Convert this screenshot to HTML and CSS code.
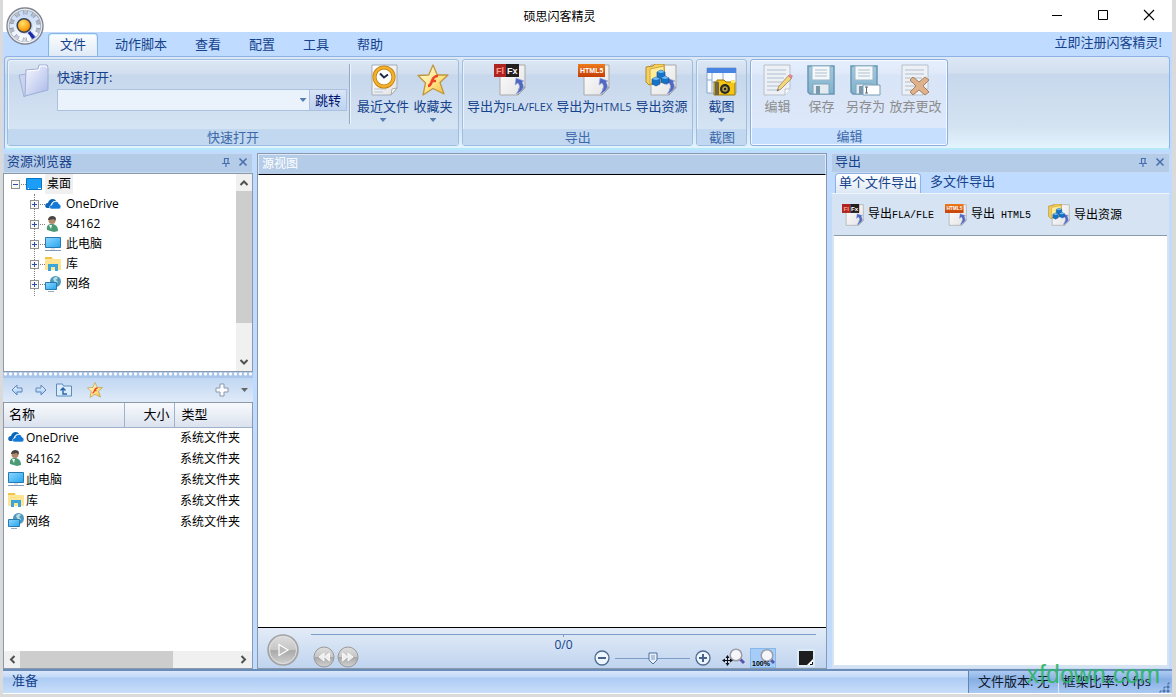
FILE: index.html
```html
<!DOCTYPE html>
<html lang="zh-CN">
<head>
<meta charset="utf-8">
<meta name="viewport" content="width=device-width, initial-scale=1">
<title>硕思闪客精灵</title>
<link rel="stylesheet" href="styles.css">
</head>
<body>
<svg class="sprite" aria-hidden="true">
  <defs>
    <linearGradient id="g-silver" x1="0" y1="0" x2="0" y2="1"><stop offset="0" stop-color="#c3c8d1"/><stop offset=".5" stop-color="#a4acba"/><stop offset="1" stop-color="#dde1e8"/></linearGradient>
    <linearGradient id="g-gear" x1="0" y1="0" x2="0" y2="1"><stop offset="0" stop-color="#c6daf6"/><stop offset="1" stop-color="#fafcff"/></linearGradient>
    <linearGradient id="g-folder" x1="0" y1="0" x2="1" y2="1"><stop offset="0" stop-color="#f8f9ff"/><stop offset="1" stop-color="#a9b8e8"/></linearGradient>
    <radialGradient id="g-orange" cx=".4" cy=".35" r=".7"><stop offset="0" stop-color="#ffe36a"/><stop offset=".6" stop-color="#ffab1c"/><stop offset="1" stop-color="#e98500"/></radialGradient>
    <linearGradient id="g-star" x1="0" y1="0" x2="1" y2="1"><stop offset="0" stop-color="#fffde6"/><stop offset=".55" stop-color="#ffe58a"/><stop offset="1" stop-color="#f2b52e"/></linearGradient>
    <linearGradient id="g-page" x1="0" y1="0" x2="1" y2="1"><stop offset="0" stop-color="#ffffff"/><stop offset="1" stop-color="#e2e2e2"/></linearGradient>
    <linearGradient id="g-html" x1="0" y1="0" x2="0" y2="1"><stop offset="0" stop-color="#ee7b1c"/><stop offset="1" stop-color="#c33d05"/></linearGradient>
    <linearGradient id="g-screen" x1="0" y1="0" x2="1" y2="1"><stop offset="0" stop-color="#8fd8ff"/><stop offset="1" stop-color="#25a5ee"/></linearGradient>
    <linearGradient id="g-knob" x1="0" y1="0" x2="0" y2="1"><stop offset="0" stop-color="#dedede"/><stop offset=".5" stop-color="#c6c6c6"/><stop offset=".52" stop-color="#a9a9a9"/><stop offset="1" stop-color="#d2d2d2"/></linearGradient>
    <linearGradient id="g-arrow" x1="0" y1="0" x2="0" y2="1"><stop offset="0" stop-color="#ffffff"/><stop offset="1" stop-color="#8fbdf0"/></linearGradient>
    <linearGradient id="g-disk" x1="0" y1="0" x2="0" y2="1"><stop offset="0" stop-color="#a3c9de"/><stop offset="1" stop-color="#7fb2cd"/></linearGradient>
  </defs>
  <symbol id="i-orb" viewBox="0 0 38 38">
    <circle cx="19" cy="19" r="18" fill="url(#g-silver)" stroke="#7d8592" stroke-width="1.400"/>
    <circle cx="19" cy="19" r="16.800" fill="none" stroke="#fff" stroke-opacity=".8"/>
    <circle cx="19" cy="19" r="13" fill="none" stroke="#8391a8" stroke-width="5.500" stroke-dasharray="5 3.168" stroke-dashoffset="2.500"/>
    <circle cx="19" cy="19" r="13" fill="none" stroke="url(#g-gear)" stroke-width="5" stroke-dasharray="4 4.168" stroke-dashoffset="2"/>
    <circle cx="19" cy="19" r="11.500" fill="url(#g-gear)"/>
    <circle cx="19" cy="19" r="8" fill="#d3dae6"/>
    <path d="M23 25l5 6" stroke="#1b2aa5" stroke-width="3.400"/><path d="M25.500 25l4 5" stroke="#8ea2e8"/>
    <circle cx="18" cy="18.500" r="6.800" fill="url(#g-orange)" stroke="#3d4257" stroke-width="1.600"/>
  </symbol>
  <symbol id="i-folder" viewBox="0 0 32 34">
    <path d="M1 11l8-1 2 19-5 4z" fill="#c9d3f0" stroke="#a3b1d8"/>
    <path d="M8 6l12-1 1-4h8l1 3v22L7 32z" fill="url(#g-folder)" stroke="#9eacd6"/>
    <path d="M9 7l12-1 1-4h6l1 2" fill="none" stroke="#fff"/>
  </symbol>
  <symbol id="i-clock" viewBox="0 0 32 32">
    <path d="M5 1h25v23l-6 7H5z" fill="url(#g-page)" stroke="#a3aebd"/><path d="M24 31l1-6 5-1z" fill="#fff" stroke="#aaa"/>
    <path d="M7 25h12M7 28h9" stroke="#b7c4d6"/>
    <circle cx="17" cy="13" r="9.500" fill="#fdfdfd" stroke="#b97e0c" stroke-width="4"/><circle cx="17" cy="13" r="9.500" fill="none" stroke="#f7ae2a" stroke-width="2.500"/>
    <path d="M13 9.500l4 4 4-3" fill="none" stroke="#222c48" stroke-width="2"/>
  </symbol>
  <symbol id="i-star" viewBox="0 0 32 32">
    <path d="M16 1l4.300 10H31l-8 7.500L27 30l-11-5.500L6 31l2.500-12L1 11.500l10.700-.5z" fill="url(#g-star)" stroke="#bf9640" stroke-width="1.300" stroke-linejoin="round"/>
    <path d="M21 12c-4 0-5 2-6 5s-2 5-4 5M14 17h5" fill="none" stroke="#ee4326" stroke-width="2.600"/>
  </symbol>
  <symbol id="i-pagearrow" viewBox="0 0 32 32">
    <path d="M6 1h25v23l-7 7H6z" fill="url(#g-page)" stroke="#a9a9a9"/><path d="M24 31l1-7 6-1z" fill="#fff" stroke="#999"/>
    <path d="M22 30c7-3 9-7 6-12l2-1-8-3-1 7 3-2c3 4 1 7-2 11z" fill="#5068c0" stroke="#99abe4" stroke-width=".6"/>
  </symbol>
  <symbol id="i-res" viewBox="0 0 32 32">
    <use href="#i-pagearrow"/><path d="M1 3l7-1 2-2h9l1 17-16 4-3-3z" fill="#f3d160" stroke="#b88a20"/><path d="M5 5l14-3v16L5 20z" fill="#ffec98" stroke="#d1a63c"/>
    <g fill="#1673c8" stroke="#0a4a96" stroke-width=".6"><path d="M12 8l4-2 4 2v5l-4 2-4-2z"/><path d="M7 15l4-2 4 2v5l-4 2-4-2z"/><path d="M16 14l4-2 4 2v4l-4 2-4-2z"/></g><path d="M12 8l4 1 4-1-4-2zM7 15l4 1 4-1-4-2zM16 14l4 1 4-1-4-2z" fill="#6fbcf5"/>
  </symbol>
  <symbol id="i-shot" viewBox="0 0 32 32">
    <path d="M2 4h29v25H2z" fill="#f8fbff" stroke="#8aa4c8"/><path d="M2 4h29v5H2z" fill="#4a84e2"/><path d="M7 9v19M2 16h5M18 9v8M7 18h11" stroke="#8dabd3"/>
    <path d="M9 18h3v-2h7l2 2h9v13H9z" fill="#f2c611" stroke="#95740a"/><path d="M10 18h4v13h-4z" fill="#6e6550"/><path d="M26 16h4v3h-4z" fill="#ffe95c"/>
    <circle cx="20" cy="25" r="5" fill="#292929"/><circle cx="20" cy="25" r="2.800" fill="#b5a248"/><circle cx="20" cy="25" r="1.200" fill="#222"/>
  </symbol>
  <symbol id="i-page" viewBox="0 0 32 32">
    <path d="M3 1h26v24l-5 6H3z" fill="#edf1f6" stroke="#b6c0cd"/><path d="M24 31v-6h5" fill="#fff" stroke="#b6c0cd"/>
    <path d="M6 6h19M6 10h19M6 14h17M6 18h15M6 22h14M6 26h12" stroke="#c5cedb" stroke-width="1.500"/>
  </symbol>
  <symbol id="i-edit" viewBox="0 0 32 32">
    <use href="#i-page"/><path d="M16 27l2-5 10-11 3 3-11 11z" fill="#f4d878" stroke="#a9967a"/><path d="M27 12l2-2 3 2-2 3z" fill="#d9868e"/><path d="M16 27l2-1-1-1z" fill="#555"/>
  </symbol>
  <symbol id="i-save" viewBox="0 0 32 32">
    <path d="M3 2h26v28H5l-2-2z" fill="url(#g-disk)" stroke="#6a96b1" stroke-width="1.500"/><path d="M7 2h18v14H7z" fill="#f4f8fb" stroke="#9bb8ca"/><path d="M10 6h12M10 9h12M10 12h12" stroke="#aebecb"/>
    <path d="M8 20h16v10H8z" fill="#e3ebf1" stroke="#7fa4bb"/><path d="M11 22h4v8h-4z" fill="#7998aa"/>
  </symbol>
  <symbol id="i-saveas" viewBox="0 0 32 32"><use href="#i-save" x="-1"/><path d="M14 21h17v10H14z" fill="#fff" stroke="#799bb5"/><path d="M16 23h3M16 29h3M17.500 23v6" stroke="#567"/></symbol>
  <symbol id="i-discard" viewBox="0 0 32 32"><use href="#i-page"/><path d="M14 13l6 5 6-5 4 3-6 6 6 6-4 3-6-5-6 5-3-3 6-6-6-6z" fill="#dfb28e" stroke="#a9805f"/></symbol>
  <symbol id="i-desktop" viewBox="0 0 16 16"><path d="M.5 2.500h15v11H.5z" fill="#1b9df8" stroke="#0876c8"/><path d="M2 12.500h1M12 12.500h3" stroke="#fff"/></symbol>
  <symbol id="i-cloud" viewBox="0 0 16 16"><path d="M2 12C-1 11 0 7 3 7c1-5 7-5 8-2-4 0-6 3-5 7z" fill="#0a64b8"/><path d="M6 13c-2-1-2-4 1-4 0-4 6-5 7-1 3 1 2 5 0 5z" fill="#1478d6" stroke="#fff" stroke-width=".6"/></symbol>
  <symbol id="i-user" viewBox="0 0 16 16"><path d="M2 14c-1-5 2-6 5-6s6 2 6 7l-4 1z" fill="#4a9a76"/><path d="M4 9l2 4 1-4z" fill="#f5fbf8"/><circle cx="7" cy="4.500" r="3.500" fill="#b18a6c"/><path d="M3 4c0-5 8-5 8-1l-1 2-1-2-5 1z" fill="#4a4542"/></symbol>
  <symbol id="i-pc" viewBox="0 0 16 16"><path d="M.5 1.500h15v10H.5z" fill="url(#g-screen)" stroke="#287bb0"/><path d="M6 12h4v2H6z" fill="#dde6ef"/><path d="M0 14.500h16" stroke="#7f9bb8"/></symbol>
  <symbol id="i-lib" viewBox="0 0 16 16"><path d="M0 1h7l1 2h8v11H0z" fill="#ffe493"/><path d="M0 1h7v2H0z" fill="#f0c34a"/><path d="M3 15V8h10v7h-3v-4H6v4z" fill="#39a5d8"/></symbol>
  <symbol id="i-net" viewBox="0 0 16 16"><circle cx="10.500" cy="5.500" r="5.500" fill="#4f98bd"/><path d="M8 3c2-3 4-2 5-1l-2 2 2 2-2 3z" fill="#b2dbe2"/><path d="M.5 6.500h11v7H.5z" fill="url(#g-screen)" stroke="#287bb0"/><path d="M3 15.500h6" stroke="#9ab"/></symbol>
  <symbol id="i-pin" viewBox="0 0 10 10"><path d="M3 1.500h5M3.500 1v5M7 1v5M1 6.500h8M5 7v3" fill="none" stroke="#4a6fae" stroke-width="1.200"/></symbol>
  <symbol id="i-x" viewBox="0 0 10 10"><path d="M1.500 1.500l7 7M8.500 1.500l-7 7" stroke="#4a6fae" stroke-width="1.600"/></symbol>
  <symbol id="i-back" viewBox="0 0 12 12"><path d="M1 6l5-5v3h5v4H6v3z" fill="url(#g-arrow)" stroke="#5c87bd" stroke-linejoin="round"/></symbol>
  <symbol id="i-up" viewBox="0 0 16 14"><path d="M.5 13V1h6l1 2h8v10z" fill="#dcecfc" stroke="#5d8cbc"/><path d="M11 11H7V5M4.500 7.500L7 5l2.500 2.500" fill="none" stroke="#2563ad" stroke-width="1.400"/></symbol>
  <symbol id="i-plus" viewBox="0 0 14 14"><path d="M5 1h4v4h4v4H9v4H5V9H1V5h4z" fill="#fafcff" stroke="#8b98aa"/></symbol>
  <symbol id="i-play" viewBox="0 0 32 32"><circle cx="16" cy="16" r="15" fill="url(#g-knob)" stroke="#a3a3a3" stroke-width="1.500"/><circle cx="16" cy="16" r="13.500" fill="none" stroke="#e0e0e0"/><path d="M12 10.500l9 5.500-9 5.500z" fill="#bbb" stroke="#fff" stroke-width="1.200"/></symbol>
  <symbol id="i-ff" viewBox="0 0 22 22"><circle cx="11" cy="11" r="10" fill="url(#g-knob)" stroke="#9a9a9a"/><path d="M5.500 7l5 4-5 4zM11 7l5 4-5 4z" fill="#eee" stroke="#fff" stroke-width=".8"/></symbol>
  <symbol id="i-zin" viewBox="0 0 16 16"><circle cx="8" cy="8" r="7" fill="#edf5fe" stroke="#4f6b91" stroke-width="1.300"/><path d="M4 8h8M8 4v8" stroke="#46618b" stroke-width="2"/></symbol>
  <symbol id="i-zout" viewBox="0 0 16 16"><circle cx="8" cy="8" r="7" fill="#edf5fe" stroke="#4f6b91" stroke-width="1.300"/><path d="M4 8h8" stroke="#46618b" stroke-width="2"/></symbol>
  <symbol id="i-fit" viewBox="0 0 24 20"><path d="M18 11l4 4" stroke="#5758ad" stroke-width="3"/><circle cx="14" cy="7" r="5.800" fill="#f6f6fa" stroke="#9b9da9" stroke-width="1.500"/><path d="M1 12.500h9M5.500 8v9" stroke="#111"/><path d="M0 12.500l3-2v4zM11 12.500l-3-2v4zM5.500 7l-2 3h4zM5.500 18l-2-3h4z" fill="#111"/></symbol>
  <symbol id="i-bg" viewBox="0 0 20 20"><path d="M1 1h18v18H1z" fill="#dceaf6"/><path d="M3 3h14v14H3z" fill="#1d1d1d"/><path d="M17 11l-6 6h6z" fill="#fff"/><path d="M16.500 14v2.500H14" fill="none" stroke="#111"/></symbol>
  <symbol id="i-min" viewBox="0 0 12 12"><path d="M1 6.500h10" stroke="#000"/></symbol>
  <symbol id="i-max" viewBox="0 0 12 12"><path d="M1.500 1.500h9v9h-9z" fill="none" stroke="#000"/></symbol>
  <symbol id="i-close" viewBox="0 0 12 12"><path d="M1 1l10 10M11 1L1 11" stroke="#000" stroke-width="1.100"/></symbol>
  <symbol id="i-chev" viewBox="0 0 10 10"><path d="M1.500 7L5 3.500 8.500 7" fill="none" stroke="#505050" stroke-width="2"/></symbol>
</svg>

<div class="window">
  <header class="titlebar">
    <button class="orb" aria-label="应用程序菜单"><svg><use href="#i-orb"/></svg></button>
    <h1 class="title">硕思闪客精灵</h1>
    <button class="winbtn" aria-label="最小化"><svg><use href="#i-min"/></svg></button>
    <button class="winbtn" aria-label="最大化"><svg><use href="#i-max"/></svg></button>
    <button class="winbtn" aria-label="关闭"><svg><use href="#i-close"/></svg></button>
  </header>

  <nav class="menu">
    <button class="menu-tab active">文件</button>
    <button class="menu-tab">动作脚本</button>
    <button class="menu-tab">查看</button>
    <button class="menu-tab">配置</button>
    <button class="menu-tab">工具</button>
    <button class="menu-tab">帮助</button>
    <a class="register" href="#register">立即注册闪客精灵!</a>
  </nav>

  <section class="ribbon">
    <div class="group">
      <div class="group-body">
        <svg class="folder"><use href="#i-folder"/></svg>
        <form class="quick">
          <label for="quick-path">快速打开:</label>
          <div class="combo">
            <input id="quick-path" type="text">
            <button type="button" class="drop" aria-label="展开"><span class="caret"></span></button>
            <button type="button" class="go">跳转</button>
          </div>
        </form>
        <button class="big"><svg><use href="#i-clock"/></svg><span>最近文件</span><span class="caret"></span></button>
        <button class="big"><svg><use href="#i-star"/></svg><span>收藏夹</span><span class="caret"></span></button>
      </div>
      <h2 class="caption">快速打开</h2>
    </div>
    <div class="group">
      <div class="group-body">
        <button class="big"><svg class="lettered" viewBox="0 0 32 32"><use href="#i-pagearrow"/><path d="M0 0h12v13H0z" fill="#ae2422"/><path d="M12 0h13v13H12z" fill="#231f20"/><text x="2" y="10" font-size="9" fill="#ff9f82">Fl</text><text x="13" y="10" font-size="9" fill="#fff">Fx</text></svg><span>导出为<span class="latin">FLA/FLEX</span></span></button>
        <button class="big"><svg class="lettered" viewBox="0 0 32 32"><use href="#i-pagearrow"/><path d="M0 0h27v13H0z" fill="url(#g-html)"/><text x="2" y="9" font-size="7" fill="#fff">HTML5</text></svg><span>导出为<span class="latin">HTML5</span></span></button>
        <button class="big"><svg><use href="#i-res"/></svg><span>导出资源</span></button>
      </div>
      <h2 class="caption">导出</h2>
    </div>
    <div class="group">
      <div class="group-body">
        <button class="big"><svg><use href="#i-shot"/></svg><span>截图</span><span class="caret"></span></button>
      </div>
      <h2 class="caption">截图</h2>
    </div>
    <div class="group lit">
      <div class="group-body">
        <button class="big" disabled><svg><use href="#i-edit"/></svg><span>编辑</span></button>
        <button class="big" disabled><svg><use href="#i-save"/></svg><span>保存</span></button>
        <button class="big" disabled><svg><use href="#i-saveas"/></svg><span>另存为</span></button>
        <button class="big" disabled><svg><use href="#i-discard"/></svg><span>放弃更改</span></button>
      </div>
      <h2 class="caption">编辑</h2>
    </div>
  </section>

  <main class="workspace">
    <aside class="explorer">
      <div class="panel-head"><h2>资源浏览器</h2>
        <button aria-label="固定"><svg><use href="#i-pin"/></svg></button>
        <button aria-label="关闭"><svg><use href="#i-x"/></svg></button>
      </div>
      <div class="tree-box">
        <ul class="tree">
          <li><div class="node"><button class="toggle open" aria-label="折叠"></button><svg><use href="#i-desktop"/></svg><span class="current">桌面</span></div>
            <ul>
              <li><div class="node"><button class="toggle" aria-label="展开"></button><svg><use href="#i-cloud"/></svg><span>OneDrive</span></div></li>
              <li><div class="node"><button class="toggle" aria-label="展开"></button><svg><use href="#i-user"/></svg><span>84162</span></div></li>
              <li><div class="node"><button class="toggle" aria-label="展开"></button><svg><use href="#i-pc"/></svg><span>此电脑</span></div></li>
              <li><div class="node"><button class="toggle" aria-label="展开"></button><svg><use href="#i-lib"/></svg><span>库</span></div></li>
              <li><div class="node"><button class="toggle" aria-label="展开"></button><svg><use href="#i-net"/></svg><span>网络</span></div></li>
            </ul>
          </li>
        </ul>
        <div class="scroll vertical">
          <button aria-label="向上"><svg><use href="#i-chev"/></svg></button>
          <div class="track"><div class="thumb"></div></div>
          <button class="down" aria-label="向下"><svg><use href="#i-chev"/></svg></button>
        </div>
      </div>
      <div class="splitter"></div>
      <div class="files-tools">
        <button aria-label="后退"><svg><use href="#i-back"/></svg></button>
        <button class="flip" aria-label="前进"><svg><use href="#i-back"/></svg></button>
        <button class="wide" aria-label="向上一级"><svg><use href="#i-up"/></svg></button>
        <button class="wide fav" aria-label="收藏"><svg><use href="#i-star"/></svg></button>
        <button class="add" aria-label="添加"><svg><use href="#i-plus"/></svg></button>
        <button aria-label="更多"><span class="caret gray"></span></button>
      </div>
      <div class="files-box">
        <table class="files">
          <thead><tr><th class="name">名称</th><th class="size">大小</th><th>类型</th></tr></thead>
          <tbody>
            <tr><td><svg><use href="#i-cloud"/></svg>OneDrive</td><td></td><td>系统文件夹</td></tr>
            <tr><td><svg><use href="#i-user"/></svg>84162</td><td></td><td>系统文件夹</td></tr>
            <tr><td><svg><use href="#i-pc"/></svg>此电脑</td><td></td><td>系统文件夹</td></tr>
            <tr><td><svg><use href="#i-lib"/></svg>库</td><td></td><td>系统文件夹</td></tr>
            <tr><td><svg><use href="#i-net"/></svg>网络</td><td></td><td>系统文件夹</td></tr>
          </tbody>
        </table>
        <div class="scroll horizontal">
          <button class="left" aria-label="向左"><svg><use href="#i-chev"/></svg></button>
          <div class="track"><div class="thumb"></div></div>
          <button class="right" aria-label="向右"><svg><use href="#i-chev"/></svg></button>
        </div>
      </div>
    </aside>

    <section class="viewer">
      <h2 class="viewer-head">源视图</h2>
      <div class="canvas"></div>
      <div class="player">
        <button class="play" aria-label="播放"><svg><use href="#i-play"/></svg></button>
        <div class="player-main">
          <div class="timeline"></div>
          <div class="player-row">
            <div class="transport">
              <button class="flip" aria-label="快退"><svg><use href="#i-ff"/></svg></button>
              <button aria-label="快进"><svg><use href="#i-ff"/></svg></button>
            </div>
            <span class="frames">0/0</span>
            <div class="zoom">
              <button aria-label="缩小"><svg><use href="#i-zout"/></svg></button>
              <input type="range" aria-label="缩放" min="0" max="100" value="50">
              <button aria-label="放大"><svg><use href="#i-zin"/></svg></button>
              <button class="fit" aria-label="适合窗口"><svg><use href="#i-fit"/></svg></button>
              <button class="full" aria-label="原始大小"><svg class="lettered" viewBox="0 0 26 20"><path d="M20 11l4 4" stroke="#5758ad" stroke-width="3"/><circle cx="17" cy="7.500" r="5.800" fill="#f6f6fa" stroke="#9b9da9" stroke-width="1.500"/><text x="2" y="18" font-size="7">100%</text></svg></button>
              <button class="bg" aria-label="背景颜色"><svg><use href="#i-bg"/></svg></button>
            </div>
          </div>
        </div>
      </div>
    </section>

    <aside class="export">
      <div class="panel-head"><h2>导出</h2>
        <button aria-label="固定"><svg><use href="#i-pin"/></svg></button>
        <button aria-label="关闭"><svg><use href="#i-x"/></svg></button>
      </div>
      <div class="export-tabs">
        <button class="active">单个文件导出</button>
        <button>多文件导出</button>
      </div>
      <div class="export-body">
        <div class="export-tools">
          <button><svg class="lettered" viewBox="0 0 32 32"><use href="#i-pagearrow"/><path d="M0 0h12v13H0z" fill="#ae2422"/><path d="M12 0h13v13H12z" fill="#231f20"/><text x="2" y="10" font-size="9" fill="#ff9f82">Fl</text><text x="13" y="10" font-size="9" fill="#fff">Fx</text></svg><span>导出<span class="mono">FLA/FLE</span></span></button>
          <button><svg class="lettered" viewBox="0 0 32 32"><use href="#i-pagearrow"/><path d="M0 0h27v13H0z" fill="url(#g-html)"/><text x="2" y="9" font-size="7" fill="#fff">HTML5</text></svg><span>导出<span class="mono"> HTML5</span></span></button>
          <button><svg><use href="#i-res"/></svg><span>导出资源</span></button>
        </div>
        <div class="export-list"></div>
      </div>
    </aside>
  </main>

  <footer class="status">
    <span class="ready">准备</span>
    <div class="info"><span>文件版本: 无</span><span class="rate">框架比率: 0 fps</span><i class="grip"></i></div>
  </footer>
  <div class="watermark">xfdown.com</div>
</div>
</body>
</html>
```

FILE: styles.css
```css
* { box-sizing: border-box; }
body {
  margin: 0;
  background: #dcdcdc;
  color: #000;
  font: 13px/20px "Open Sans", "Noto Sans CJK SC", sans-serif;
}
h1, h2 { margin: 0; font-size: 13px; font-weight: 400; }
ul { margin: 0; padding: 0; list-style: none; }
button { margin: 0; padding: 0; border: 0; background: none; color: inherit; font: inherit; }
svg { display: block; width: 16px; height: 16px; flex: none; }
.sprite { position: absolute; width: 0; height: 0; }
.lettered text { font-family: "Liberation Sans", sans-serif; font-weight: 700; }

.window {
  position: relative;
  display: flex;
  flex-direction: column;
  height: 100vh;
  border: solid #dadada;
  border-width: 0 4px 3px 3px;
  background: #bfdbff;
}

/* title bar and menu */
.titlebar { position: relative; display: flex; height: 32px; flex: none; background: #fff; }
.title { flex: 1; padding: 7px 0 0 82px; font-size: 12px; text-align: center; }
.winbtn { display: flex; width: 46px; height: 30px; align-items: center; justify-content: center; }
.winbtn svg { width: 12px; height: 12px; }
.orb { position: absolute; top: 7px; left: 3px; z-index: 2; }
.orb svg { width: 38px; height: 38px; }
.menu { display: flex; height: 24px; flex: none; padding: 1px 10px 0 45px; color: #15428b; }
.menu-tab { height: 22px; padding: 0 14px; }
.menu-tab.active {
  position: relative;
  z-index: 1;
  height: 23px;
  margin-right: 3px;
  padding: 0 11px 2px;
  border: 1px solid #8db2e3;
  border-bottom: 0;
  border-radius: 4px 4px 0 0;
  background: linear-gradient(#fdfeff, #dfeaf6);
  box-shadow: inset 1px 1px #d5f3fd, inset -1px 0 #d5f3fd;
}
.register { margin-left: auto; line-height: 18px; color: #15428b; text-decoration: none; }

/* ribbon */
.ribbon {
  display: flex;
  gap: 3px;
  height: 94px;
  flex: none;
  margin: 0 2px 0 1px;
  padding: 2px;
  border: 1px solid #8db2e3;
  border-bottom: 2px solid #b5e9f7;
  border-radius: 4px;
  background: linear-gradient(#dde8f5, #d2dfef 16px, #c7d8ed 17px, #d3e3f1 70px, #e3f4fe);
}
.group {
  display: flex;
  flex-direction: column;
  border: 1px solid #9dbde2;
  border-radius: 3px;
  background: linear-gradient(#dde7f4, #d1deef 14px, #c7d7ec 15px, #d9e8f5);
  box-shadow: inset 1px 1px #e9f1fa;
  color: #15428b;
}
.group-body { display: flex; flex: 1; padding: 4px 3px 0 2px; }
.caption { height: 16px; background: #c1d8f0; color: #3e6aaa; line-height: 16px; text-align: center; }
.lit { border-color: #8dafe0; background: linear-gradient(#e6effc, #dfe9f9 14px, #d8e4f7 15px, #dfebfb); box-shadow: inset 0 0 0 1px #f4f9ff; }
.lit .group-body { padding: 4px 4px 0; }
.lit .caption { margin: 0 1px 1px; background: #c7dfff; }
.big { display: flex; min-width: 44px; height: 64px; flex-direction: column; align-items: center; padding: 0 2px; line-height: 18px; }
.big svg { width: 32px; height: 32px; margin-bottom: 1px; }
.big .caret { margin-top: 3px; }
.big:disabled { color: #8d8d8d; }
.latin { font-size: 11px; }
.caret { display: block; width: 7px; height: 4px; background: #567db1; clip-path: polygon(0 0, 100% 0, 50% 100%); }
.caret.gray { background: #666; }
.folder { width: 32px; height: 34px; margin: 0 7px 0 8px; }
.quick { margin-right: 5px; padding: 3px 2px 0 0; border-right: 1px solid #8fa9cb; height: 60px; box-shadow: 1px 0 #eef5fc; }
.quick label { display: block; height: 22px; line-height: 20px; }
.combo { display: flex; height: 22px; width: 290px; border: 1px solid #abc1de; background: #eaf2fb; }
.combo input { min-width: 0; flex: 1; padding: 0 4px; border: 0; background: none; font: inherit; }
.drop { display: flex; width: 12px; align-items: center; justify-content: center; }
.go { width: 37px; border-left: 1px solid #abc1de; background: linear-gradient(#d9e5f7, #bed2f0); color: #00156e; line-height: 18px; }

/* workspace */
.workspace { display: flex; flex: 1; min-height: 0; gap: 4px; padding: 3px 2px 0 0; }
.panel-head { display: flex; height: 20px; flex: none; align-items: center; padding: 0 4px 2px 3px; border: 1px solid #c6daf2; background: #b5cce8; color: #15428b; line-height: 16px; gap: 7px; }
.panel-head h2 { flex: 1; line-height: 16px; padding-bottom: 2px; }
.panel-head svg { width: 10px; height: 10px; }
.explorer { display: flex; width: 250px; flex: none; flex-direction: column; min-height: 0; }
.tree-box { display: flex; height: 199px; flex: none; border: 1px solid #8b9aab; background: #fff; font-size: 12px; }
.tree { flex: 1; padding-left: 7px; }
.tree ul { position: relative; padding-left: 19px; }
.tree ul::before { position: absolute; top: 0; bottom: -2px; left: 23px; border-left: 1px dotted #808080; content: ""; }
.node { display: flex; height: 20px; align-items: center; }
.node svg { margin: 0 5px 0 6px; }
.node .current { margin-left: -2px; padding: 0 2px; background: #f0f0f0; }
.toggle {
  position: relative;
  width: 9px;
  height: 9px;
  border: 1px solid #919191;
  background:
    linear-gradient(#2c4ca5, #2c4ca5) 50% 50% / 5px 1px no-repeat,
    linear-gradient(#2c4ca5, #2c4ca5) 50% 50% / 1px 5px no-repeat,
    #f7f7f7;
}
.toggle.open { background: linear-gradient(#2c4ca5, #2c4ca5) 50% 50% / 5px 1px no-repeat, #f7f7f7; }
.toggle::after { position: absolute; top: 3px; left: 9px; width: 5px; border-top: 1px dotted #808080; content: ""; }
.scroll { display: flex; background: #f0f0f0; }
.scroll button { display: flex; width: 16px; height: 17px; flex: none; align-items: center; justify-content: center; }
.scroll svg { width: 10px; height: 10px; }
.track { flex: 1; }
.thumb { background: #cdcdcd; }
.vertical { width: 16px; flex: none; flex-direction: column; }
.vertical .thumb { height: 81%; }
.horizontal .thumb { width: 71%; height: 100%; }
.down { transform: rotate(180deg); }
.left { transform: rotate(-90deg); }
.right { transform: rotate(90deg); }
.flip { transform: scaleX(-1); }
.splitter { height: 6px; flex: none; background: radial-gradient(circle, #fff 1px, transparent 2px) 0 0 / 5px 4px repeat-x, #a9c6ea; }
.files-tools { display: flex; height: 24px; flex: none; align-items: center; gap: 12px; padding: 0 5px 0 8px; background: linear-gradient(#c1d7f2, #dfeaf8); }
.files-tools svg { width: 12px; height: 12px; }
.files-tools .wide { margin-left: -3px; }
.files-tools .wide svg { width: 16px; height: 16px; }
.files-tools .fav { margin-left: 3px; }
.files-tools .add { margin-left: auto; }
.files-tools .add svg { width: 14px; height: 14px; }
.files-box { display: flex; flex: 1; flex-direction: column; justify-content: space-between; border: 1px solid #8b9aab; background: #fff; }
.files { width: 100%; border-collapse: collapse; table-layout: fixed; font-size: 12px; }
.files th { height: 24px; padding: 0 7px 2px; border-bottom: 1px solid #9fb2cb; background: linear-gradient(#f7f9fc, #dbe2ee); font-size: 13px; font-weight: 400; line-height: 20px; text-align: left; }
.files .name { width: 120px; padding-left: 5px; border-right: 1px solid #9fb2cb; }
.files .size { width: 50px; padding-right: 4px; border-right: 1px solid #9fb2cb; text-align: right; }
.files td { height: 21px; padding: 0 6px; line-height: 20px; white-space: nowrap; }
.files td:first-child { padding-left: 4px; }
.files td svg { display: inline-block; margin-right: 2px; vertical-align: -3px; }

/* viewer */
.viewer { display: flex; min-width: 0; flex: 1; flex-direction: column; border: 1px solid #8b9aab; }
.viewer-head { height: 21px; padding-left: 3px; border: 1px solid #dbe8f7; border-bottom: 1px solid #000; background: #b5cce8; color: #fff; font-size: 12px; line-height: 17px; }
.canvas { flex: 1; background: #fff; }
.player { display: flex; height: 41px; flex: none; gap: 12px; padding: 4px 10px 0 9px; border-top: 1px solid #000; background: linear-gradient(#e3ecf7, #c0d4ef); }
.play svg { width: 32px; height: 32px; }
.player-main { flex: 1; padding-top: 2px; }
.timeline { height: 3px; border-top: 1px solid #7d9dc9; background: linear-gradient(#7d9dc9, #7d9dc9) 50% 0 / 1px 3px no-repeat; }
.player-row { display: grid; grid-template-columns: 1fr auto 1fr; height: 31px; }
.transport { display: flex; gap: 2px; padding: 9px 0 0 2px; }
.transport svg { width: 22px; height: 22px; }
.frames { height: 16px; color: #15428b; font-size: 12px; line-height: 16px; }
.zoom { display: flex; align-items: center; justify-content: flex-end; padding-top: 11px; height: 31px; }
.zoom input { width: 75px; height: 16px; margin: 0 5px; background: none; appearance: none; }
.zoom input::-webkit-slider-runnable-track { height: 13px; background: linear-gradient(#7d9dc9, #7d9dc9) 0 50% / 100% 1px no-repeat; }
.zoom input::-webkit-slider-thumb {
  width: 10px;
  height: 13px;
  appearance: none;
  background: url("data:image/svg+xml,%3Csvg xmlns='http://www.w3.org/2000/svg' viewBox='0 0 10 13'%3E%3Cpath d='M1 1h8v7l-4 4-4-4z' fill='%23e8f1fc' stroke='%23506e9c'/%3E%3Cpath d='M4 3v5M6 3v5' stroke='%237b96bd'/%3E%3C/svg%3E");
}
.fit { margin-left: 11px; }
.fit svg { width: 24px; height: 20px; }
.full { margin: 0 20px 0 4px; background: #a5cdf7; box-shadow: inset 0 0 0 1px #86b8ec; }
.full svg { width: 26px; height: 20px; }
.bg svg { width: 20px; height: 20px; }

/* export panel */
.export { display: flex; width: 339px; flex: none; flex-direction: column; }
.export-tabs { display: flex; height: 20px; flex: none; padding-left: 4px; color: #15428b; }
.export-tabs button { height: 19px; padding: 0 9px 2px; line-height: 17px; }
.export-tabs .active { height: 20px; padding: 0 3px 2px; border: 1px solid #8db2e3; border-bottom: 0; border-radius: 4px 4px 0 0; background: linear-gradient(#fff, #dce8f5); }
.export-body { display: flex; flex: 1; flex-direction: column; padding: 0 2px 3px; border: 1px solid #c6daf2; border-top-color: #eef5fd; background: #d5e3f2; }
.export-tools { display: flex; height: 41px; align-items: center; gap: 11px; padding-left: 8px; font-size: 12px; }
.export-tools button { display: flex; min-width: 92px; align-items: center; gap: 4px; }
.export-tools svg { width: 22px; height: 22px; }
.mono { font-family: "Liberation Mono", monospace; font-size: 10px; white-space: pre; }
.export-list { flex: 1; border-top: 1px solid #8b9aab; background: #fff; }

/* status bar */
.status { display: flex; height: 25px; flex: none; border-top: 2px solid #6b8cb9; background: linear-gradient(#d9e8fb, #c2d9f8 6px, #adcbf3 7px, #c8defa); color: #15428b; border-bottom: 1px solid #fff; }
.ready { flex: 1; padding-left: 9px; line-height: 19px; }
.info { display: flex; width: 204px; border-left: 1px solid #5f84b8; padding-left: 9px; background: linear-gradient(#aecbf2, #8fb5e8 7px, #86aee3 8px, #a9c9f2); color: #10192c; line-height: 21px; position: relative; }
.rate { margin-left: 8px; padding-left: 4px; border-left: 1px solid #dceafb; }
.grip { position: absolute; right: 2px; bottom: 0; width: 12px; height: 12px; background: radial-gradient(#4a73ae 1px, transparent 2px) 0 0 / 4px 4px; clip-path: polygon(100% 0, 100% 100%, 0 100%); }
.watermark { position: absolute; right: 12px; bottom: 5px; color: #2db467; font: 25px/30px "Liberation Sans", sans-serif; opacity: .9; pointer-events: none; }
```
